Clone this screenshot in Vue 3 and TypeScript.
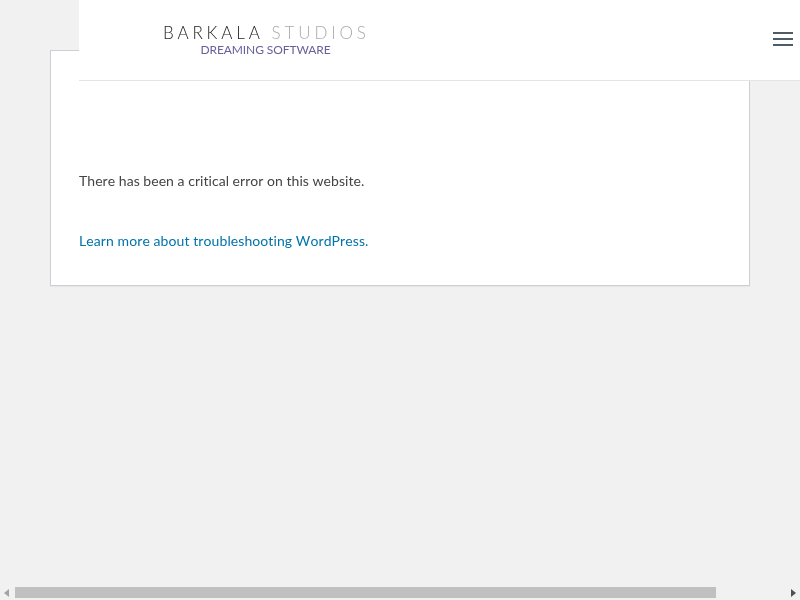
<script setup lang="ts">
const message = 'There has been a critical error on this website.'
const linkText = 'Learn more about troubleshooting WordPress.'
</script>

<template>
  <div class="page">
    <main class="card">
      <p class="msg plain">{{ message }}</p>
      <p class="msg"><a href="#" class="link">{{ linkText }}</a></p>
    </main>

    <header class="topbar">
      <div class="logo">
        <div class="logo-main"><span class="dark">BARKALA</span> <span class="light">STUDIOS</span></div>
        <div class="logo-sub">DREAMING SOFTWARE</div>
      </div>
      <button class="burger" aria-label="Menu"><i></i><i></i><i></i></button>
    </header>

    <div class="scrollbar">
      <span class="arrow left"></span>
      <div class="track"><div class="thumb"></div></div>
      <span class="arrow right"></span>
    </div>
  </div>
</template>

<style>
html, body { margin: 0; padding: 0; background: #f1f1f1; overflow: hidden; }
</style>

<style scoped>
.page {
  position: relative;
  width: 800px;
  height: 600px;
  box-sizing: border-box;
  padding-top: 50px;
  overflow: hidden;
  background: #f1f1f1;
  font-family: Lato, "Liberation Sans", sans-serif;
  font-size: 14px;
  color: #444;
}
.card {
  width: 700px;
  height: 236px;
  margin: 0 auto;
  box-sizing: border-box;
  padding: 119px 28px 0;
  background: #fff;
  border: 1px solid #ccd0d4;
  box-shadow: 0 1px 1px rgba(0, 0, 0, 0.04);
}
.msg {
  margin: 0 0 39px;
  line-height: 21px;
  font-kerning: none;
  text-rendering: optimizeSpeed;
  will-change: opacity;
}
.plain { letter-spacing: 0.04px; }
.link { color: #0073aa; text-decoration: none; letter-spacing: 0.09px; }
.topbar {
  position: absolute;
  top: 0;
  left: 79px;
  right: 0;
  height: 81px;
  box-sizing: border-box;
  background: #fff;
  border-bottom: 1px solid #e5e5e5;
}
.logo {
  position: absolute;
  left: 84px;
  top: 22px;
  width: 206px;
  text-align: center;
  filter: blur(0.3px);
}
.logo-main {
  font-weight: 300;
  font-size: 17px;
  line-height: 22px;
  letter-spacing: 3.85px;
  white-space: nowrap;
}
.dark { color: #222; }
.light { color: #aaa; }
.logo-sub {
  font-weight: 400;
  font-size: 12px;
  letter-spacing: -0.1px;
  line-height: 13px;
  margin-top: -1px;
  margin-left: -1px;
  color: #66619a;
  white-space: nowrap;
}
.burger {
  position: absolute;
  left: 694px;
  top: 32px;
  width: 20px;
  padding: 0;
  border: 0;
  background: none;
  display: flex;
  flex-direction: column;
  gap: 4px;
}
.burger i { display: block; height: 2px; background: #4f5b66; }
.scrollbar {
  position: absolute;
  left: 0;
  right: 0;
  bottom: 2px;
  height: 11px;
  display: flex;
  align-items: center;
}
.track { position: absolute; left: 15px; right: 0; top: 0; bottom: 0; }
.thumb { width: 701px; height: 11px; background: #c0c0c0; }
.arrow {
  position: absolute;
  top: 2px;
  width: 0;
  height: 0;
  border-top: 4px solid transparent;
  border-bottom: 4px solid transparent;
}
.arrow.left { left: 4px; border-right: 5px solid #a3a3a3; }
.arrow.right { left: 791px; border-left: 5px solid #505050; }
</style>
